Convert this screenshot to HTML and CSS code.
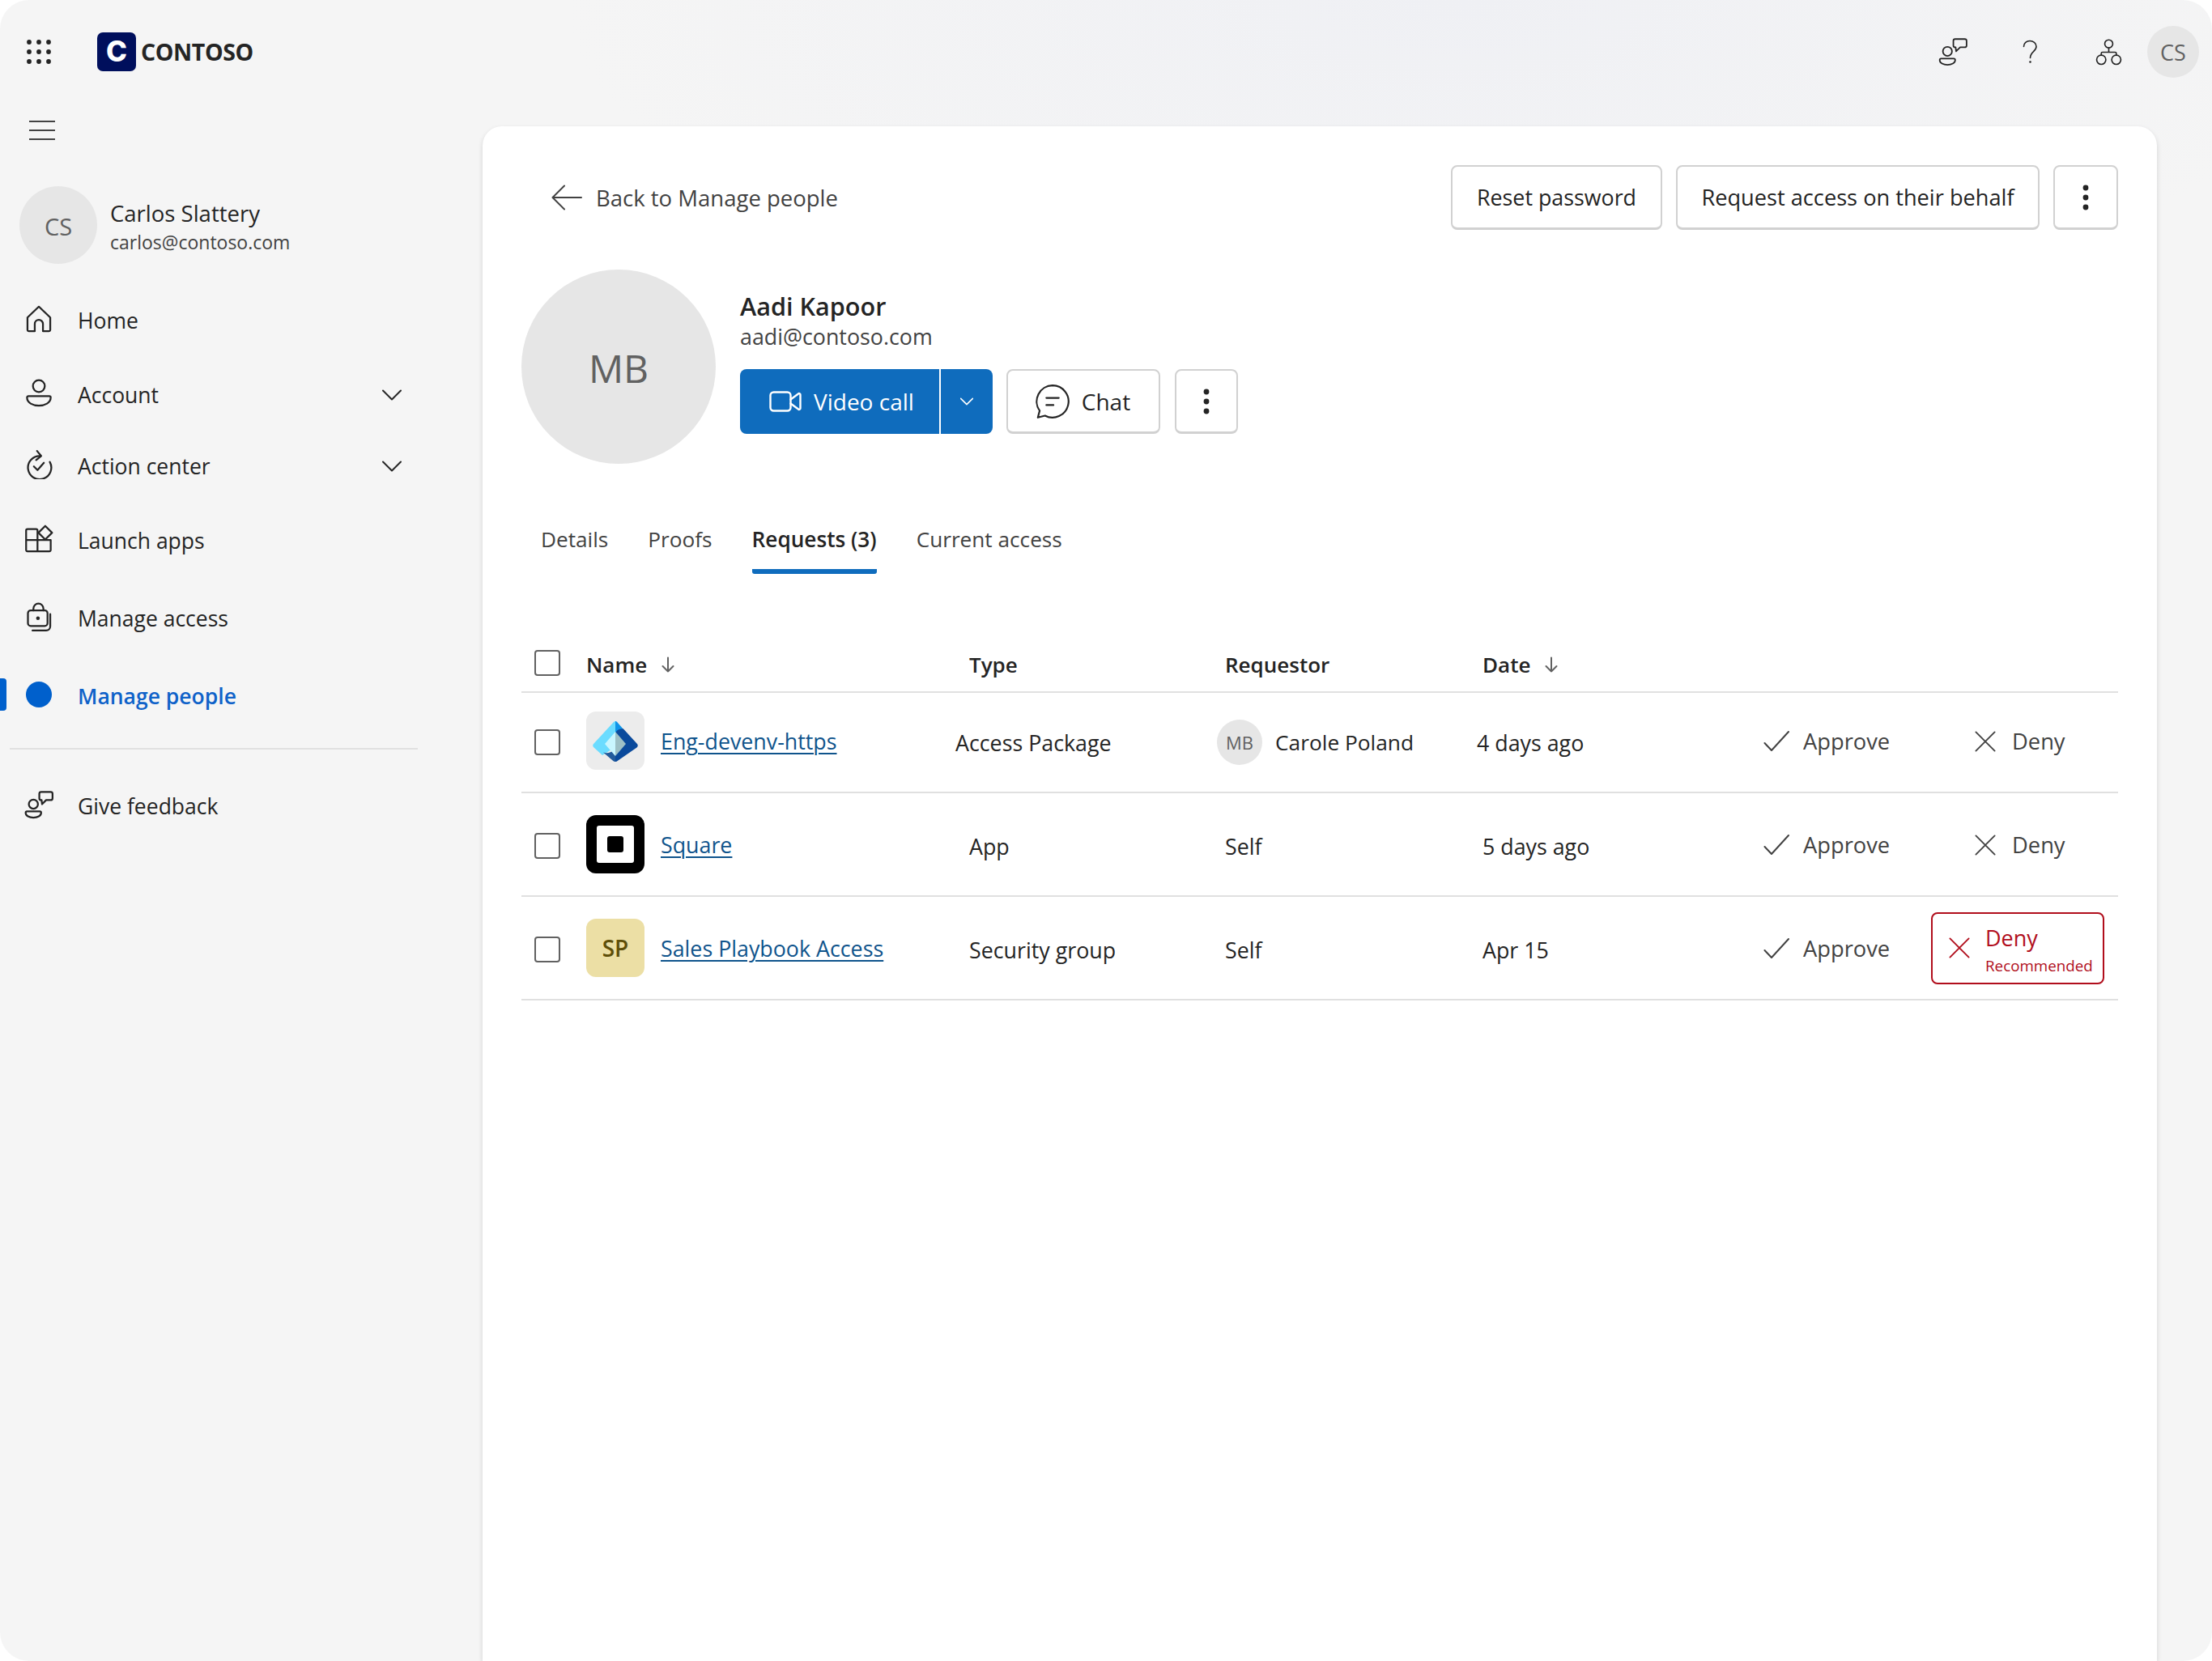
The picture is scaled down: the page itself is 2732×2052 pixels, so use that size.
FILE: index.html
```html
<!DOCTYPE html>
<html lang="en">
<head>
<meta charset="utf-8">
<title>Contoso - Manage people</title>
<link rel="stylesheet" href="styles.css">
</head>
<body>
<svg class="sprite" aria-hidden="true">
  <symbol id="i-feedback" viewBox="0 0 32 32"><circle cx="10" cy="15.500" r="5"/><path d="M1.500 25a1.500 1.500 0 0 1 1.500-1.500h14a1.500 1.500 0 0 1 1.500 1.500c0 3.300-4 5.300-8.500 5.300s-8.500-2-8.500-5.300z"/><path d="M18.500 2h10.500a2 2 0 0 1 2 2v5a2 2 0 0 1-2 2h-5l-4.500 4.500-.5-4.500h-.5a2 2 0 0 1-2-2V4a2 2 0 0 1 2-2z"/></symbol>
  <symbol id="i-check" viewBox="0 0 32 32"><path d="M1.500 18l8.500 9L31 4"/></symbol>
  <symbol id="i-x" viewBox="0 0 28 28"><path d="M1.500 1.500l25 25M26.500 1.500l-25 25"/></symbol>
  <symbol id="i-chev" viewBox="0 0 24 14"><path d="M1 1.500l11 11 11-11"/></symbol>
  <symbol id="i-kebab" viewBox="0 0 8 32"><circle cx="4" cy="4" r="3.400"/><circle cx="4" cy="16" r="3.400"/><circle cx="4" cy="28" r="3.400"/></symbol>
  <symbol id="i-sort" viewBox="0 0 20 20"><path d="M10 1.500v17M3.500 12l6.500 6.500 6.500-6.500"/></symbol>
</svg>

<div class="app">
  <header class="topbar">
    <div class="brand">
      <svg class="waffle" viewBox="0 0 30 30"><circle cx="3" cy="3" r="2.900"/><circle cx="15" cy="3" r="2.900"/><circle cx="27" cy="3" r="2.900"/><circle cx="3" cy="15" r="2.900"/><circle cx="15" cy="15" r="2.900"/><circle cx="27" cy="15" r="2.900"/><circle cx="3" cy="27" r="2.900"/><circle cx="15" cy="27" r="2.900"/><circle cx="27" cy="27" r="2.900"/></svg>
      <span class="logo-tile">C</span>
      <span class="logo-word">CONTOSO</span>
    </div>
    <div class="top-tools">
      <svg class="icon thin tool-feedback"><use href="#i-feedback"/></svg>
      <svg class="icon thin tool-help" viewBox="0 0 20 30"><path d="M2 8.500C2 4 5.500 1.500 9.500 1.500s8 2.500 8 7c0 6-7.500 6.500-7.500 14"/><circle class="solid" cx="10" cy="27.500" r="1.300"/></svg>
      <svg class="icon thin tool-org" viewBox="0 0 32 32"><circle cx="16" cy="6" r="4.800"/><circle cx="7" cy="25" r="5.500"/><circle cx="25" cy="25" r="5.500"/><path d="M16 11v5M7 19.500V17.500a1.500 1.500 0 0 1 1.500-1.500h15a1.500 1.500 0 0 1 1.500 1.500v2"/></svg>
      <span class="avatar avatar-top">CS</span>
    </div>
  </header>

  <div class="workspace">
    <aside class="sidebar">
      <div class="hamburger"><span></span><span></span><span></span></div>
      <div class="me">
        <span class="avatar avatar-me">CS</span>
        <div class="me-text">
          <div class="me-name">Carlos Slattery</div>
          <div class="me-mail">carlos@contoso.com</div>
        </div>
      </div>
      <nav class="nav">
        <a class="nav-item">
          <svg class="icon nav-icon" viewBox="0 0 32 32"><path d="M3.500 14.500L16 2.500l12.500 12v13.500a1.500 1.500 0 0 1-1.500 1.500h-6.500v-8a4.500 4.500 0 0 0-9 0v8H5a1.500 1.500 0 0 1-1.500-1.500z"/></svg>
          <span>Home</span>
        </a>
        <a class="nav-item">
          <svg class="icon nav-icon" viewBox="0 0 32 32"><circle cx="16" cy="8" r="6.500"/><path d="M3 20.500a1.500 1.500 0 0 1 1.500-1.500h23a1.500 1.500 0 0 1 1.500 1.500c0 6-6.500 9-13 9s-13-3-13-9z"/></svg>
          <span>Account</span>
          <svg class="icon chev"><use href="#i-chev"/></svg>
        </a>
        <a class="nav-item">
          <svg class="icon nav-icon" viewBox="0 0 32 32"><path d="M17.500 6.500A12.800 12.800 0 1 0 28 13"/><path d="M14 1l4.500 5.500L13 11"/><path d="M10.500 18l4 4 7-8"/></svg>
          <span>Action center</span>
          <svg class="icon chev"><use href="#i-chev"/></svg>
        </a>
        <a class="nav-item">
          <svg class="icon nav-icon" viewBox="0 0 32 32"><path d="M3.500 5h9.500a1.500 1.500 0 0 1 1.500 1.500V29.500H3.500A1.500 1.500 0 0 1 2 28V6.500A1.500 1.500 0 0 1 3.500 5zM2 17h26.500M14.500 29.500h13a1.500 1.500 0 0 0 1.500-1.500V17"/><path d="M23 1.500l7.500 7.500-7.500 7.500-7.500-7.500z"/></svg>
          <span>Launch apps</span>
        </a>
        <a class="nav-item">
          <svg class="icon nav-icon" viewBox="0 0 28 32"><path d="M8 9V7a5.500 5.500 0 0 1 11 0v2"/><rect x="2" y="9" width="21.500" height="17" rx="3"/><circle class="solid" cx="13" cy="17.500" r="2"/><path d="M26.500 13v13.500a4.500 4.500 0 0 1-4.500 4.500H7"/></svg>
          <span>Manage access</span>
        </a>
        <a class="nav-item nav-active">
          <span class="nav-pill"></span>
          <span class="nav-dot"></span>
          <span>Manage people</span>
        </a>
      </nav>
      <div class="side-rule"></div>
      <a class="nav-item nav-foot">
        <svg class="icon nav-icon"><use href="#i-feedback"/></svg>
        <span>Give feedback</span>
      </a>
    </aside>

    <main class="card">
      <div class="card-top">
        <a class="back">
          <svg class="icon back-arrow" viewBox="0 0 38 32"><path d="M37 16H2M16 1.500L1.500 16 16 30.500"/></svg>
          <span>Back to Manage people</span>
        </a>
        <div class="actions">
          <button class="btn btn-reset">Reset password</button>
          <button class="btn btn-request">Request access on their behalf</button>
          <button class="btn btn-kebab"><svg class="kebab"><use href="#i-kebab"/></svg></button>
        </div>
      </div>

      <section class="profile">
        <span class="avatar avatar-profile">MB</span>
        <div class="profile-body">
          <div class="profile-name">Aadi Kapoor</div>
          <div class="profile-mail">aadi@contoso.com</div>
          <div class="profile-actions">
            <div class="split">
              <button class="split-main">
                <svg class="icon-white video" viewBox="0 0 40 26"><rect x="1.500" y="1.500" width="25" height="23" rx="4"/><path d="M26.500 10.500L36 3.500a1.500 1.500 0 0 1 2.500 1.200v16.600a1.500 1.500 0 0 1-2.500 1.200l-9.500-7"/></svg>
                <span>Video call</span>
              </button>
              <button class="split-drop"><svg class="icon-white split-chev"><use href="#i-chev"/></svg></button>
            </div>
            <button class="btn btn-chat">
              <svg class="icon chat-icon" viewBox="0 0 40 40"><path d="M20 2a18 18 0 1 1-8.500 33.900L3.500 38l2-7.600A18 18 0 0 1 20 2z"/><path d="M13 16h14M13 24h8"/></svg>
              <span>Chat</span>
            </button>
            <button class="btn btn-kebab btn-kebab-sm"><svg class="kebab"><use href="#i-kebab"/></svg></button>
          </div>
        </div>
      </section>

      <div class="tabs">
        <a class="tab">Details</a>
        <a class="tab">Proofs</a>
        <a class="tab tab-active">Requests (3)</a>
        <a class="tab">Current access</a>
      </div>

      <div class="table">
        <div class="row row-head">
          <span class="check"></span>
          <div class="head-cell">Name <svg class="icon sort"><use href="#i-sort"/></svg></div>
          <div class="head-cell">Type</div>
          <div class="head-cell">Requestor</div>
          <div class="head-cell">Date <svg class="icon sort"><use href="#i-sort"/></svg></div>
        </div>

        <div class="row row-first">
          <span class="check check-low"></span>
          <div class="name-cell">
            <span class="tile tile-grey">
              <svg class="tile-art" viewBox="0 0 72 72">
                <path fill="#6bdcff" d="M33.500 13.500L9.500 39.500a3.500 3.500 0 0 0 0 5L20 54l16-10V12a3.500 3.500 0 0 0-2.500 1.500z"/>
                <path fill="#0f94e8" d="M36 12c1 0 2 .5 2.600 1.500L46 22l-10 6z"/>
                <path fill="#0a4a9c" d="M46 21.500L62.500 39.500a3.500 3.500 0 0 1 0 5L39 60.800a4 4 0 0 1-3 1.200V28c0-4 5-7.500 10-6.500z"/>
                <path fill="#235b9c" d="M21 50.500c5 2 10 0 15-4V62a4 4 0 0 1-3-1.200z"/>
                <path fill="#c9f6ff" d="M36 25v30L23 40z"/>
                <path fill="#9dc0c6" d="M36 25l13 15-13 15z"/>
              </svg>
            </span>
            <a class="link">Eng-devenv-https</a>
          </div>
          <div class="cell cell-type-shift">Access Package</div>
          <div class="cell cell-req">
            <span class="avatar avatar-req">MB</span>
            <span>Carole Poland</span>
          </div>
          <div class="cell cell-date-shift">4 days ago</div>
          <a class="act act-approve"><svg class="icon act-check"><use href="#i-check"/></svg><span>Approve</span></a>
          <a class="act act-deny"><svg class="icon act-x"><use href="#i-x"/></svg><span>Deny</span></a>
        </div>

        <div class="row">
          <span class="check check-low"></span>
          <div class="name-cell">
            <span class="tile tile-black"><span class="sq-outer"><span class="sq-inner"></span></span></span>
            <a class="link">Square</a>
          </div>
          <div class="cell">App</div>
          <div class="cell">Self</div>
          <div class="cell">5 days ago</div>
          <a class="act act-approve"><svg class="icon act-check"><use href="#i-check"/></svg><span>Approve</span></a>
          <a class="act act-deny"><svg class="icon act-x"><use href="#i-x"/></svg><span>Deny</span></a>
        </div>

        <div class="row">
          <span class="check check-low"></span>
          <div class="name-cell">
            <span class="tile tile-sand">SP</span>
            <a class="link">Sales Playbook Access</a>
          </div>
          <div class="cell">Security group</div>
          <div class="cell">Self</div>
          <div class="cell">Apr 15</div>
          <a class="act act-approve"><svg class="icon act-check"><use href="#i-check"/></svg><span>Approve</span></a>
          <a class="deny-box">
            <svg class="icon act-x act-x-red"><use href="#i-x"/></svg>
            <span class="deny-text"><span class="deny-main">Deny</span><span class="deny-sub">Recommended</span></span>
          </a>
        </div>
      </div>
    </main>
  </div>
</div>
</body>
</html>
```

FILE: styles.css
```css
* { box-sizing: border-box; }

html, body {
  margin: 0;
  background: #fff;
}

body {
  width: 2732px;
  height: 2052px;
  overflow: hidden;
  font-family: "Open Sans", "Noto Sans", sans-serif;
  font-size: 26.800px;
  color: #242424;
}

.sprite { display: none; }

svg { display: block; flex: none; }

.icon {
  fill: none;
  stroke: #242424;
  stroke-width: 2;
  stroke-linejoin: round;
  stroke-linecap: round;
}

.icon.thin { stroke-width: 1.600; }

.icon .solid { fill: #242424; stroke: none; }

.icon-white {
  fill: none;
  stroke: #fff;
  stroke-width: 2.400;
  stroke-linejoin: round;
  stroke-linecap: round;
}

.app {
  width: 2732px;
  height: 2052px;
  border-radius: 36px;
  overflow: hidden;
  display: flex;
  flex-direction: column;
  background:
    radial-gradient(ellipse 1100px 420px at 1800px 0, #eff0f4 0%, rgba(239, 240, 244, 0) 100%),
    #f5f5f5;
}

/* top bar */
.topbar {
  flex: none;
  height: 128px;
  display: flex;
  align-items: center;
  justify-content: space-between;
  padding-right: 16px;
}

.brand {
  display: flex;
  align-items: center;
  padding-left: 33px;
}

.waffle { width: 30px; height: 30px; fill: #242424; }

.logo-tile {
  width: 48px;
  height: 48px;
  margin-left: 57px;
  border-radius: 7px;
  background: #000f5c;
  color: #fff;
  font-family: Inter, "Open Sans", sans-serif;
  font-size: 35px;
  font-weight: 800;
  line-height: 47px;
  text-align: center;
}

.logo-word {
  margin-left: 6px;
  font-size: 28.500px;
  font-weight: 700;
  letter-spacing: -0.4px;
  color: #242424;
}

.top-tools { display: flex; align-items: center; }

.tool-feedback { width: 36px; height: 36px; }
.tool-help { width: 21px; height: 30px; margin-left: 67px; }
.tool-org { width: 33px; height: 33px; margin-left: 70px; }

.avatar {
  flex: none;
  display: flex;
  align-items: center;
  justify-content: center;
  border-radius: 50%;
  background: #e6e6e6;
  color: #616161;
}

.avatar-top { width: 64px; height: 64px; margin-left: 31px; font-size: 27px; font-weight: 500; }
.avatar-me { width: 96px; height: 96px; font-size: 29px; font-weight: 500; padding-top: 2px; }
.avatar-profile { width: 240px; height: 240px; padding-top: 2px; font-size: 48px; font-weight: 500; }
.avatar-req { width: 56px; height: 56px; font-size: 22px; font-weight: 500; }

/* layout */
.workspace {
  flex: 1;
  min-height: 0;
  display: flex;
}

/* sidebar */
.sidebar { flex: none; width: 596px; }

.hamburger {
  height: 66px;
  padding-left: 36px;
  display: flex;
  flex-direction: column;
  justify-content: center;
  gap: 9px;
}

.hamburger span {
  display: block;
  width: 32px;
  height: 2px;
  background: #424242;
}

.me {
  margin-top: 36px;
  padding-left: 24px;
  display: flex;
  align-items: center;
  gap: 16px;
}

.me-text { padding-top: 3px; }
.me-name { font-size: 27.500px; font-weight: 500; line-height: 38px; }
.me-mail { font-size: 23px; line-height: 32px; color: #424242; }

.nav {
  margin-top: 24px;
  display: grid;
  grid-template-rows: 92px 92px 84px 100px 92px 100px;
}

.nav-item {
  position: relative;
  width: 516px;
  display: flex;
  align-items: center;
  gap: 32px;
  padding-left: 32px;
  padding-right: 20px;
  font-size: 26.500px;
  color: #242424;
}

.nav-icon {
  width: 36px;
  height: 36px;
  margin: 0 -2px 5px;
}

.chev { width: 24px; height: 14px; margin-left: auto; }

.nav-active { color: #0f62c9; font-weight: 600; }

.nav-pill {
  position: absolute;
  left: 0;
  top: 28px;
  width: 8px;
  height: 40px;
  border-radius: 0 4px 4px 0;
  background: #0060cc;
}

.nav-dot {
  width: 32px;
  height: 32px;
  margin-bottom: 4px;
  border-radius: 50%;
  background: #0060cc;
}

.side-rule {
  width: 504px;
  height: 2px;
  margin: 14px 0 0 12px;
  background: #e0e0e0;
}

.nav-foot { height: 60px; margin-top: 40px; }

/* card */
.card {
  flex: none;
  width: 2068px;
  margin-top: 28px;
  padding: 48px 48px 0;
  background: #fff;
  border-radius: 24px 24px 0 0;
  box-shadow: 0 3px 6px rgba(0, 0, 0, 0.14);
}

.card-top {
  display: flex;
  align-items: center;
  justify-content: space-between;
}

.back {
  display: flex;
  align-items: center;
  gap: 17px;
  padding-left: 37px;
  color: #424242;
  font-size: 27.500px;
  font-weight: 500;
}

.back-arrow { width: 38px; height: 32px; stroke: #424242; }

.actions { display: flex; gap: 17px; }

.btn {
  height: 80px;
  padding: 0;
  display: flex;
  align-items: center;
  justify-content: center;
  background: #fff;
  border: 2px solid #d1d1d1;
  border-bottom-width: 3px;
  border-radius: 8px;
  font: inherit;
  font-weight: 500;
  color: #242424;
}

.btn-reset { width: 261px; }
.btn-request { width: 449px; font-size: 27.200px; }
.btn-kebab { width: 80px; }
.btn-kebab-sm { width: 78px; margin-left: 1px; }

.kebab { width: 8px; height: 32px; fill: #242424; }

.profile {
  margin-top: 49px;
  display: flex;
  gap: 30px;
}

.profile-body { padding-top: 23px; }

.profile-name { font-size: 30.600px; font-weight: 600; line-height: 44px; }
.profile-mail { font-size: 26.800px; line-height: 32px; color: #424242; }

.profile-actions {
  margin-top: 24px;
  display: flex;
  gap: 17px;
}

.split {
  display: flex;
  gap: 2px;
}

.split-main, .split-drop {
  height: 80px;
  border: 0;
  padding: 0;
  display: flex;
  align-items: center;
  background: #0f6cbd;
  color: #fff;
  font: inherit;
  font-weight: 500;
}

.split-main {
  width: 246px;
  padding-left: 36px;
  gap: 15px;
  border-radius: 8px 0 0 8px;
  font-size: 28px;
}

.split-drop {
  width: 64px;
  justify-content: center;
  border-radius: 0 8px 8px 0;
}

.video { width: 40px; height: 26px; }
.split-chev { width: 16px; height: 10px; }

.btn-chat { width: 190px; gap: 14px; padding-right: 2px; font-size: 28px; }
.chat-icon { width: 44px; height: 44px; }

.tabs {
  margin-top: 67px;
  padding-left: 24px;
  display: flex;
  gap: 49px;
  font-size: 26.200px;
}

.tab {
  height: 69px;
  padding-bottom: 17px;
  line-height: 52px;
  color: #424242;
}

.tab-active {
  font-weight: 600;
  color: #242424;
  border-bottom: 6px solid #0f6cbd;
  border-radius: 0 0 3px 3px;
  padding-bottom: 11px;
}

/* table */
.table { margin-top: 75px; }

.row {
  height: 128px;
  display: grid;
  grid-template-columns: 80px 473px 316px 318px 347px 207px 231px;
  align-items: center;
  border-bottom: 2px solid #e0e0e0;
}

.row-head { height: 72px; }
.row-first { height: 124px; padding-bottom: 4px; }

.check {
  width: 32px;
  height: 32px;
  margin-left: 16px;
  border: 2px solid #616161;
  border-radius: 4px;
}

.check-low { margin-top: 4px; }

.head-cell {
  display: flex;
  align-items: center;
  gap: 16px;
  padding-top: 3px;
  font-size: 26px;
  font-weight: 600;
}

.sort { width: 20px; height: 20px; stroke: #616161; }

.name-cell {
  display: flex;
  align-items: center;
  gap: 20px;
}

.tile {
  flex: none;
  width: 72px;
  height: 72px;
  border-radius: 12px;
  display: flex;
  align-items: center;
  justify-content: center;
}

.tile-art { width: 72px; height: 72px; }
.tile-grey { background: #ececec; }
.tile-black { background: #000; }
.tile-sand { background: #ecdfa5; color: #5e4e08; font-size: 28px; font-weight: 600; }

.sq-outer {
  width: 46px;
  height: 46px;
  border-radius: 3px;
  background: #fff;
  display: flex;
  align-items: center;
  justify-content: center;
}

.sq-inner {
  width: 20px;
  height: 20px;
  border-radius: 3px;
  background: #000;
}

.link {
  padding-top: 1px;
  color: #0f548c;
  text-decoration: underline;
  text-decoration-thickness: 2px;
  text-underline-offset: 4px;
}

.cell { padding-top: 4px; }
.cell-type-shift { margin-left: -17px; }
.cell-date-shift { margin-left: -7px; }

.cell-req {
  margin-left: -10px;
  padding-top: 3px;
  display: flex;
  align-items: center;
  gap: 16px;
  font-size: 26.300px;
}

.act {
  display: flex;
  align-items: center;
  padding-top: 1px;
  color: #424242;
  font-size: 27.300px;
  font-weight: 500;
}

.act-approve { gap: 17px; }
.act-deny { gap: 20px; padding-left: 54px; }

.act-check { width: 32px; height: 32px; stroke: #424242; }
.act-x { width: 26px; height: 26px; stroke: #424242; }

.deny-box {
  width: 214px;
  height: 89px;
  padding-left: 20px;
  display: flex;
  align-items: center;
  gap: 19px;
  border: 2px solid #b10e1c;
  border-radius: 8px;
  color: #b10e1c;
}

.act-x-red { stroke: #b10e1c; }

.deny-text { display: flex; flex-direction: column; padding-top: 5px; }
.deny-main { font-size: 27px; font-weight: 500; line-height: 38px; }
.deny-sub { font-size: 18.800px; line-height: 30px; }
```
